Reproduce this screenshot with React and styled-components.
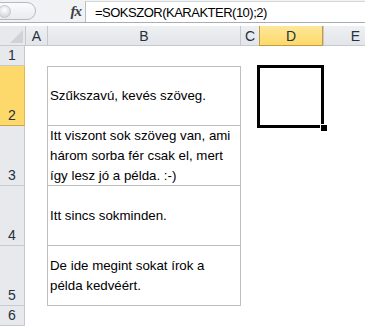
import styled, { createGlobalStyle } from 'styled-components';

const GlobalStyle = createGlobalStyle`
  html, body {
    margin: 0;
    padding: 0;
    background: #ffffff;
  }
  body {
    font-family: "Liberation Sans", Arial, sans-serif;
  }
`;

const Page = styled.div`
  width: 365px;
  height: 328px;
  overflow: hidden;
  background: #ffffff;
  display: flex;
  flex-direction: column;
`;

const FormulaBar = styled.div`
  flex-shrink: 0;
  height: 23px;
  display: flex;
  flex-direction: row;
  align-items: stretch;
  background: #f1f2f4;
  border-bottom: 1px solid #a9adb3;
  box-sizing: border-box;
  padding-top: 1px;
`;

const Handle = styled.div`
  width: 56px;
  margin: 1px 0 2px -20px;
  border: 1px solid #b6bac0;
  border-radius: 10px;
  background: linear-gradient(#fbfbfc, #e9ebee);
  display: flex;
  align-items: center;
  justify-content: flex-end;
  box-sizing: border-box;
`;

const Knob = styled.div`
  width: 11px;
  height: 11px;
  margin-right: 24px;
  border-radius: 50%;
  background: radial-gradient(circle at 50% 35%, #ffffff, #c9ccd1);
  border: 1px solid #c3c6cb;
`;

const FxButton = styled.div`
  width: 49px;
  display: flex;
  align-items: center;
  justify-content: flex-end;
  padding-right: 4px;
  box-sizing: border-box;
  font-family: "Liberation Serif", "Times New Roman", serif;
  font-style: italic;
  font-weight: bold;
  font-size: 15px;
  color: #3a3f47;
  letter-spacing: -1px;
`;

const FormulaInput = styled.div`
  flex: 1;
  background: #ffffff;
  border-left: 1px solid #b9bcc1;
  border-top: 1px solid #d4d7db;
  display: flex;
  align-items: center;
  padding-left: 9px;
  font-size: 13px;
  letter-spacing: -0.5px;
  color: #000000;
  white-space: nowrap;
`;

const Gap = styled.div`
  flex-shrink: 0;
  height: 3px;
  background: #ffffff;
`;

const Sheet = styled.div`
  flex-shrink: 0;
  display: grid;
  grid-template-columns: 25px 22px 193px 19px 64px 64px;
  grid-template-rows: 20px 20px 60px 60px 60px 60px 20px 20px;
  font-size: 13.3px;
`;

const Corner = styled.div`
  position: relative;
  background: #e7e9ec;
  border-bottom: 1px solid #c6c9ce;
  box-sizing: border-box;

  &::after {
    content: '';
    position: absolute;
    right: 2px;
    bottom: 2px;
    width: 0;
    height: 0;
    border-left: 13px solid transparent;
    border-bottom: 13px solid #cfd2d6;
  }
`;

const ColHead = styled.div`
  background: ${(props) =>
    props.$active
      ? 'linear-gradient(#fde79a, #fcd96a)'
      : 'linear-gradient(#eef0f2, #e2e5e9)'};
  border-left: 1px solid ${(props) => (props.$active ? '#c29a3f' : '#c6c9ce')};
  border-right: ${(props) => (props.$active ? '1px solid #c29a3f' : 'none')};
  border-bottom: 1px solid ${(props) => (props.$active ? '#c29a3f' : '#c6c9ce')};
  box-sizing: border-box;
  display: flex;
  align-items: center;
  justify-content: center;
  color: #27303c;
  font-size: 14px;
  padding-top: 1px;
`;

const RowHead = styled.div`
  grid-column: 1;
  background: ${(props) => (props.$active ? '#fdd86a' : '#e7e9ec')};
  border-bottom: 1px solid ${(props) => (props.$active ? '#c9a24a' : '#c6c9ce')};
  border-right: 1px solid ${(props) => (props.$active ? '#e3b74d' : '#c6c9ce')};
  box-sizing: border-box;
  display: flex;
  align-items: flex-end;
  justify-content: center;
  padding-bottom: 2px;
  color: #27303c;
  font-size: 14px;
`;

const TextCell = styled.div`
  grid-column: 3;
  margin-right: -1px;
  border: 1px solid #bfbfbf;
  border-top: ${(props) => (props.$top ? '1px solid #bfbfbf' : 'none')};
  box-sizing: border-box;
  display: flex;
  align-items: center;
  padding: 0 4px 0 2px;
  line-height: 20px;
  color: #000000;
`;

const ActiveCell = styled.div`
  grid-column: 5;
  grid-row: 3;
  position: relative;

  &::before {
    content: '';
    position: absolute;
    left: -2px;
    top: -1px;
    right: -1px;
    bottom: -2px;
    border: 3px solid #000000;
  }

  &::after {
    content: '';
    position: absolute;
    right: -4px;
    bottom: -5px;
    width: 6px;
    height: 6px;
    background: #000000;
    border-left: 1px solid #ffffff;
    border-top: 1px solid #ffffff;
  }
`;

const rows = [
  { n: 1 },
  { n: 2, text: 'Szűkszavú, kevés szöveg.' },
  { n: 3, text: 'Itt viszont sok szöveg van, ami három sorba fér csak el, mert így lesz jó a példa. :-)' },
  { n: 4, text: 'Itt sincs sokminden.' },
  { n: 5, text: 'De ide megint sokat írok a példa kedvéért.' },
  { n: 6 },
];

export default function App() {
  return (
    <>
      <GlobalStyle />
      <Page>
        <FormulaBar>
          <Handle>
            <Knob />
          </Handle>
          <FxButton>fx</FxButton>
          <FormulaInput>=SOKSZOR(KARAKTER(10);2)</FormulaInput>
        </FormulaBar>
        <Gap />
        <Sheet>
          <Corner />
          <ColHead>A</ColHead>
          <ColHead>B</ColHead>
          <ColHead>C</ColHead>
          <ColHead $active>D</ColHead>
          <ColHead>E</ColHead>
          {rows.map((row, i) => (
            <RowHead key={`h${row.n}`} $active={row.n === 2} style={{ gridRow: i + 2 }}>
              {row.n}
            </RowHead>
          ))}
          {rows
            .filter((row) => row.text)
            .map((row) => (
              <TextCell key={`c${row.n}`} $top={row.n === 2} style={{ gridRow: row.n + 1 }}>
                {row.text}
              </TextCell>
            ))}
          <ActiveCell />
        </Sheet>
      </Page>
    </>
  );
}
